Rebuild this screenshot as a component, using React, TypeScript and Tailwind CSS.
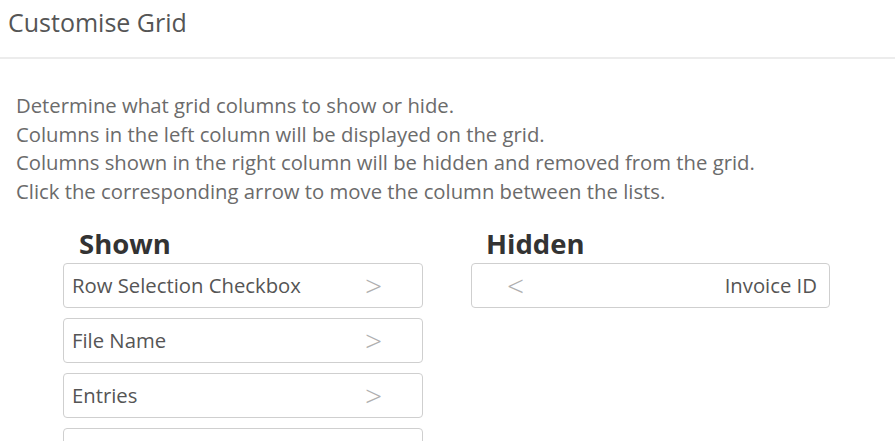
import React from "react";

const shown = ["Row Selection Checkbox", "File Name", "Entries", ""];
const hidden = ["Invoice ID"];

export default function App() {
  return (
    <div
      className="w-[895px] h-[441px] overflow-hidden bg-white text-[#555]"
      style={{ fontFamily: '"Open Sans", "Noto Sans", sans-serif' }}
    >
      <div className="h-[59px] pl-[8px] pt-[5px] border-b-2 border-[#ececec]">
        <h1 className="text-[25px] leading-[34px] text-[#555]">Customise Grid</h1>
      </div>
      <div className="pl-[16px] pt-[32px] text-[20.3px] leading-[28.5px] text-[#6b6b6b]">
        <p>Determine what grid columns to show or hide.</p>
        <p>Columns in the left column will be displayed on the grid.</p>
        <p>Columns shown in the right column will be hidden and removed from the grid.</p>
        <p>Click the corresponding arrow to move the column between the lists.</p>
      </div>
      <div className="flex pl-[63px] pt-[24px] gap-[48px]">
        <div className="w-[360px]">
          <h2 className="pl-[16px] text-[27.5px] leading-[30px] font-bold text-[#333]">Shown</h2>
          <div className="mt-[4px] flex flex-col gap-[10px]">
            {shown.map((s, i) => (
              <div
                key={i}
                className="h-[45px] flex items-center justify-between pl-[8px] pr-[40px] border border-[#cfcfcf] rounded-[4px]"
              >
                <span className="text-[20.3px] text-[#555]">{s}</span>
                {s && (
                  <span className="text-[30px] font-light text-[#b0b0b0] leading-none">&gt;</span>
                )}
              </div>
            ))}
          </div>
        </div>
        <div className="w-[359px]">
          <h2 className="pl-[15px] text-[27.5px] leading-[30px] font-bold text-[#333]">Hidden</h2>
          <div className="mt-[4px] flex flex-col gap-[10px]">
            {hidden.map((s) => (
              <div
                key={s}
                className="h-[45px] flex items-center justify-between pl-[35px] pr-[12px] border border-[#cfcfcf] rounded-[4px]"
              >
                <span className="text-[30px] font-light text-[#b0b0b0] leading-none">&lt;</span>
                <span className="text-[20.3px] text-[#555]">{s}</span>
              </div>
            ))}
          </div>
        </div>
      </div>
    </div>
  );
}
